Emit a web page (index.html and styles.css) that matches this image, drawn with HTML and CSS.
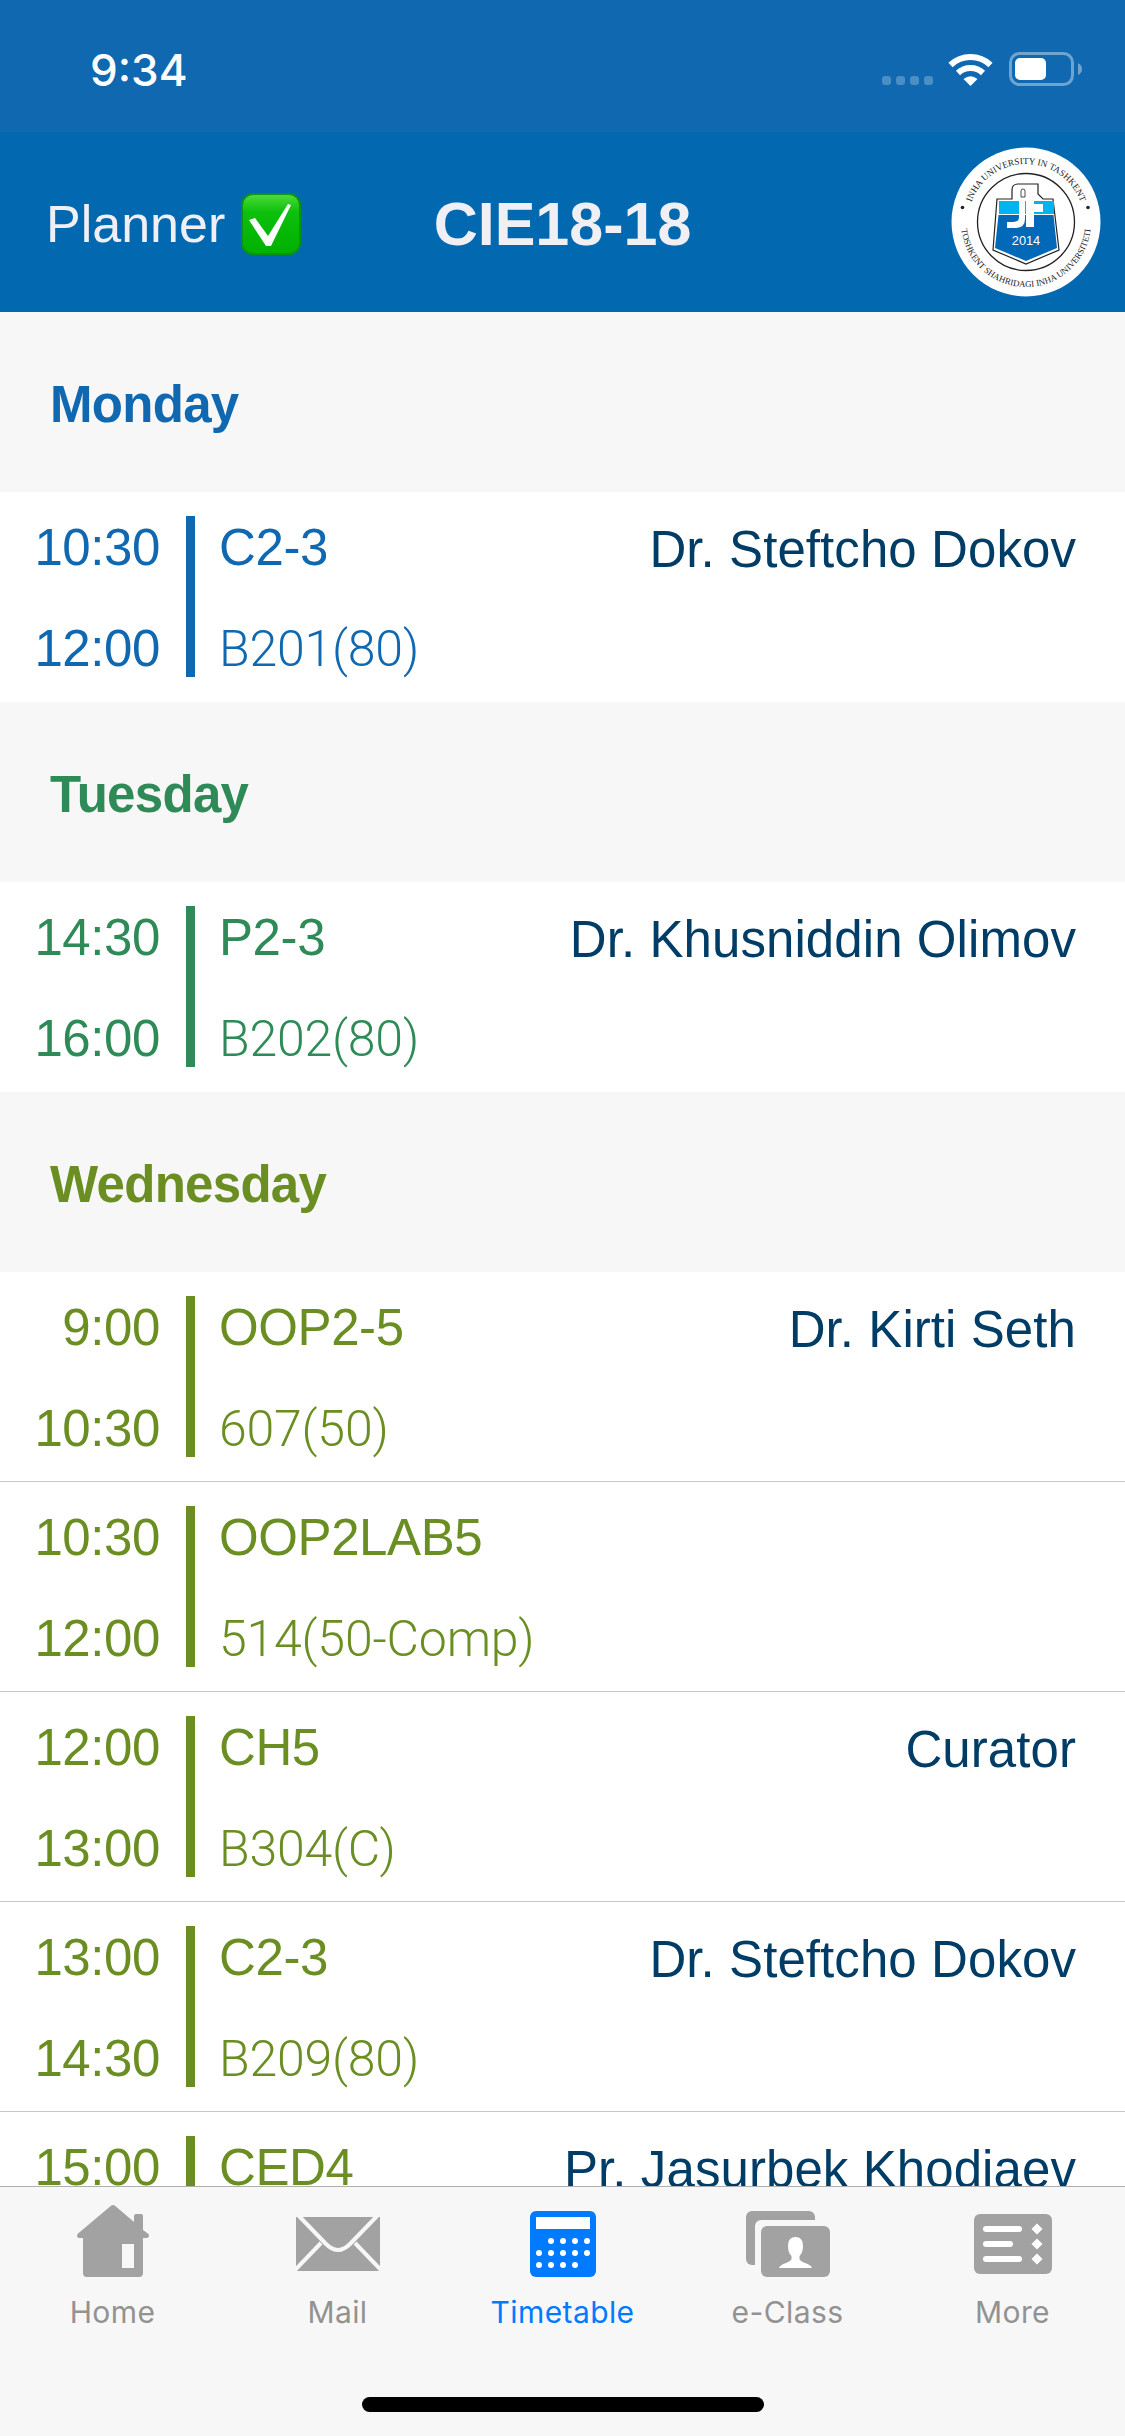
FILE: index.html
```html
<!DOCTYPE html>
<html lang="en">
<head>
    <meta charset="UTF-8">
    <meta name="viewport" content="width=device-width, initial-scale=1.0">
    <title>Planner - CIE18-18</title>
    <link rel="stylesheet" href="styles.css">
</head>
<body>
    <!-- Status Bar -->
    <div class="status-bar">
        <span class="status-time">9:34</span>
        <div class="status-icons">
            <div class="signal"><span></span><span></span><span></span><span></span></div>
            <svg class="wifi" viewBox="0 0 45 33" width="45" height="33">
                <path d="M2.5 12 A29 29 0 0 1 42.5 12" fill="none" stroke="#fff" stroke-width="6"/>
                <path d="M10 20 A18 18 0 0 1 35 20" fill="none" stroke="#fff" stroke-width="6"/>
                <path d="M15.5 26 Q22.5 20.5 29.5 26 L22.5 33 Z" fill="#fff"/>
            </svg>
            <svg class="battery" viewBox="0 0 73 34" width="73" height="34">
                <rect x="1.5" y="1.5" width="62" height="31" rx="9" fill="none" stroke="#fff" stroke-opacity="0.4" stroke-width="3"/>
                <rect x="6" y="6" width="31" height="22" rx="5" fill="#fff"/>
                <path d="M69 11 Q73 13 73 17 Q73 21 69 23 Z" fill="#fff" fill-opacity="0.4"/>
            </svg>
        </div>
    </div>

    <!-- Navigation Bar -->
    <header class="navbar">
        <div class="nav-left">
            <span class="nav-planner">Planner</span>
            <svg class="check-emoji" viewBox="0 0 60 62" width="60" height="62">
                <defs>
                    <linearGradient id="check-green" x1="0" y1="0" x2="0" y2="1">
                        <stop offset="0" stop-color="#4fdc3c"/>
                        <stop offset="0.3" stop-color="#0cc00c"/>
                        <stop offset="1" stop-color="#00b000"/>
                    </linearGradient>
                </defs>
                <rect x="1" y="1" width="58" height="60" rx="11" fill="url(#check-green)" stroke="#0a9412" stroke-width="2"/>
                <path d="M8 27 L14 25 L27 43 L47 11 L50 12 L30 53 L25 53 Z" fill="#fff"/>
            </svg>
        </div>
        <h1 class="nav-title">CIE18-18</h1>
        <svg class="logo" viewBox="0 0 150 150" width="150" height="150">
            <circle cx="75" cy="75" r="74.5" fill="#fff"/>
            <defs>
                <path id="arc-top" d="M17 75 A58 58 0 0 1 133 75"/>
                <path id="arc-bottom" d="M10 75 A65 65 0 0 0 140 75"/>
            </defs>
            <text class="logo-ring-text"><textPath href="#arc-top" startOffset="50%">INHA UNIVERSITY IN TASHKENT</textPath></text>
            <text class="logo-ring-text small"><textPath href="#arc-bottom" startOffset="50%">TOSHKENT SHAHRIDAGI INHA UNIVERSITETI</textPath></text>
            <circle cx="11.5" cy="60.5" r="1.8" fill="#222"/>
            <circle cx="137" cy="60.5" r="1.8" fill="#222"/>
            <circle cx="75" cy="75" r="48.5" fill="#fff" stroke="#222" stroke-width="1.3"/>
            <path d="M46 52 H61 V43 Q61 37 67 37 H87 V47 L92 52 H102 L108 103 L75 117 L42 103 Z" fill="#fff" stroke="#222" stroke-width="1.2"/>
            <rect x="48" y="54" width="55" height="13" fill="#00b5ef"/>
            <path d="M47.5 68 H102.5 L106 101 L75 114 L44 101 Z" fill="#0268b8"/>
            <path d="M68 44 H74 V72 Q74 81 64 81 H56 V75 H62 Q68 75 68 70 Z M75 39 H83 V57 H92 V65 H83 V80 H75 Z" fill="#fff"/>
            <path d="M70 50 V44 Q70 42 72 42 Q74 42 74 44 V50 Z" fill="none" stroke="#222" stroke-width="0.8"/>
            <text class="logo-year" x="75" y="98">2014</text>
        </svg>
    </header>

    <!-- Timetable -->
    <main class="timetable">
        <section class="day day-monday">
            <h2 class="day-name">Monday</h2>
            <div class="lesson">
                <div class="lesson-col lesson-times"><span>10:30</span><span>12:00</span></div>
                <div class="lesson-bar"></div>
                <div class="lesson-col"><span>C2-3</span><span class="room">B201(80)</span></div>
                <div class="teacher">Dr. Steftcho Dokov</div>
            </div>
        </section>

        <section class="day day-tuesday">
            <h2 class="day-name">Tuesday</h2>
            <div class="lesson">
                <div class="lesson-col lesson-times"><span>14:30</span><span>16:00</span></div>
                <div class="lesson-bar"></div>
                <div class="lesson-col"><span>P2-3</span><span class="room">B202(80)</span></div>
                <div class="teacher">Dr. Khusniddin Olimov</div>
            </div>
        </section>

        <section class="day day-wednesday">
            <h2 class="day-name">Wednesday</h2>
            <div class="lesson">
                <div class="lesson-col lesson-times"><span>9:00</span><span>10:30</span></div>
                <div class="lesson-bar"></div>
                <div class="lesson-col"><span>OOP2-5</span><span class="room">607(50)</span></div>
                <div class="teacher">Dr. Kirti Seth</div>
            </div>
            <div class="lesson">
                <div class="lesson-col lesson-times"><span>10:30</span><span>12:00</span></div>
                <div class="lesson-bar"></div>
                <div class="lesson-col"><span>OOP2LAB5</span><span class="room">514(50-Comp)</span></div>
                <div class="teacher"></div>
            </div>
            <div class="lesson">
                <div class="lesson-col lesson-times"><span>12:00</span><span>13:00</span></div>
                <div class="lesson-bar"></div>
                <div class="lesson-col"><span>CH5</span><span class="room">B304(C)</span></div>
                <div class="teacher">Curator</div>
            </div>
            <div class="lesson">
                <div class="lesson-col lesson-times"><span>13:00</span><span>14:30</span></div>
                <div class="lesson-bar"></div>
                <div class="lesson-col"><span>C2-3</span><span class="room">B209(80)</span></div>
                <div class="teacher">Dr. Steftcho Dokov</div>
            </div>
            <div class="lesson">
                <div class="lesson-col lesson-times"><span>15:00</span></div>
                <div class="lesson-bar"></div>
                <div class="lesson-col"><span>CED4</span></div>
                <div class="teacher">Pr. Jasurbek Khodiaev</div>
            </div>
        </section>
    </main>

    <!-- Tab Bar -->
    <footer class="tabbar">
        <nav class="tabs">
            <a class="tab" href="#">
                <svg viewBox="0 0 90 74" width="90" height="74">
                    <path fill-rule="evenodd" d="M43 1.8 Q45 0.4 47 1.8 L66 18 V12 Q66 10 68 10 H73 Q75 10 75 12 V26 L80.5 30 Q82 33 79 34 H75 V69 Q75 73 71 73 H19 Q15 73 15 69 V34 H11 Q8 33 9.5 30 Z M54 40 V64 H66 V40 Z"/>
                </svg>
                <span>Home</span>
            </a>
            <a class="tab" href="#">
                <svg viewBox="0 0 90 74" width="90" height="74">
                    <rect x="3" y="13" width="84" height="54"/>
                    <path class="mail-fold" d="M5 11 L33 40 Q45 52 57 40 L85 11 M1 67 L28 39 M89 67 L62 39"/>
                </svg>
                <span>Mail</span>
            </a>
            <a class="tab tab-active" href="#">
                <svg viewBox="0 0 90 74" width="90" height="74">
                    <rect x="12" y="7" width="66" height="66" rx="6"/>
                    <rect class="cut" x="18" y="13" width="54" height="12"/>
                    <g class="cut">
                        <circle cx="33" cy="37" r="3"/><circle cx="45" cy="37" r="3"/><circle cx="57" cy="37" r="3"/><circle cx="69" cy="37" r="3"/>
                        <circle cx="21" cy="49" r="3"/><circle cx="33" cy="49" r="3"/><circle cx="45" cy="49" r="3"/><circle cx="57" cy="49" r="3"/><circle cx="69" cy="49" r="3"/>
                        <circle cx="21" cy="61" r="3"/><circle cx="33" cy="61" r="3"/><circle cx="45" cy="61" r="3"/><circle cx="57" cy="61" r="3"/>
                    </g>
                </svg>
                <span>Timetable</span>
            </a>
            <a class="tab" href="#">
                <svg viewBox="0 0 90 74" width="90" height="74">
                    <rect x="3" y="7" width="69" height="54" rx="6"/>
                    <rect class="bg-cut" x="12" y="16" width="76" height="58" rx="6"/>
                    <rect x="18" y="22" width="69" height="51" rx="6"/>
                    <path class="cut" d="M52.5 33 Q60 33 60 42 Q60 49 56.5 52 V55 Q57 57 62 59 Q68 61 69 64 H36 Q37 61 43 59 Q48 57 48.5 55 V52 Q45 49 45 42 Q45 33 52.5 33 Z"/>
                </svg>
                <span>e-Class</span>
            </a>
            <a class="tab" href="#">
                <svg viewBox="0 0 90 74" width="90" height="74">
                    <rect x="6" y="10" width="78" height="60" rx="6"/>
                    <g class="cut">
                        <rect x="15" y="22" width="39" height="6" rx="3"/>
                        <rect x="15" y="37" width="30" height="6" rx="3"/>
                        <rect x="15" y="52" width="39" height="6" rx="3"/>
                        <path d="M69 19.5 L74.5 25 L69 30.5 L63.5 25 Z"/>
                        <path d="M69 34.5 L74.5 40 L69 45.5 L63.5 40 Z"/>
                        <path d="M69 49.5 L74.5 55 L69 60.5 L63.5 55 Z"/>
                    </g>
                </svg>
                <span>More</span>
            </a>
        </nav>
        <div class="home-indicator"></div>
    </footer>
</body>
</html>
```

FILE: styles.css
```css
/* Base Styles */
* {
    box-sizing: border-box;
}

body {
    font-family: 'Liberation Sans', Arial, sans-serif;
    background-color: #f7f7f7;
    margin: 0;
    padding: 0;
    width: 1125px;
    height: 2436px;
    overflow: hidden;
    display: flex;
    flex-direction: column;
}

/* Status Bar */
.status-bar {
    height: 132px;
    flex-shrink: 0;
    background-color: #0f68b0;
    color: #fff;
    display: flex;
    justify-content: space-between;
    align-items: flex-start;
    padding: 52px 43px 0 90px;
}

.status-time {
    font-family: Inter, 'Liberation Sans', sans-serif;
    font-weight: 500;
    font-size: 44px;
    line-height: 36px;
}

.status-icons {
    display: flex;
    align-items: flex-end;
}

.signal {
    display: flex;
    gap: 5px;
    margin-right: 15px;
    margin-bottom: 1px;
}

.signal span {
    width: 9px;
    height: 9px;
    border-radius: 3px;
    background-color: rgba(255, 255, 255, 0.25);
}

.wifi {
    margin-right: 16px;
}

/* Navigation Bar */
.navbar {
    height: 180px;
    flex-shrink: 0;
    background-color: #0268b0;
    display: grid;
    grid-template-columns: 1fr auto 1fr;
    align-items: center;
    padding: 0 24px;
    color: #efeff4;
}

.nav-left {
    display: flex;
    align-items: center;
    gap: 16px;
    margin-left: 22px;
    font-size: 52px;
}

.nav-planner {
    padding-top: 3px;
}

.check-emoji {
    margin-top: 3px;
}

.nav-title {
    margin: 0;
    padding-top: 3px;
    font-size: 61px;
    font-weight: bold;
}

.logo {
    justify-self: end;
}

.logo-ring-text {
    font-family: 'Liberation Serif', serif;
    font-size: 9.2px;
    text-anchor: middle;
    fill: #222;
}

.logo-ring-text.small {
    font-size: 8.8px;
}

.logo-year {
    font-size: 12.8px;
    fill: #fff;
    text-anchor: middle;
}

/* Timetable */
.timetable {
    flex: 1;
    min-height: 0;
    overflow: hidden;
}

.day-name {
    margin: 0;
    height: 180px;
    display: flex;
    align-items: center;
    padding: 4px 0 0 50px;
    font-size: 51px;
    font-weight: bold;
    letter-spacing: -0.7px;
}

.lesson {
    height: 210px;
    background-color: #fff;
    border-bottom: 1px solid #c6c6c6;
    display: flex;
    align-items: flex-start;
    padding-top: 24px;
    font-size: 51px;
    line-height: 64px;
}

.lesson:last-child {
    border-bottom: none;
}

.lesson-col {
    display: flex;
    flex-direction: column;
    gap: 37px;
    white-space: nowrap;
    letter-spacing: -0.4px;
}

.lesson-times {
    width: 160px;
    align-items: flex-end;
}

.lesson-bar {
    width: 9px;
    height: 161px;
    margin: 0 24px 0 26px;
    background-color: currentColor;
}

.room {
    font-family: Roboto, 'Liberation Sans', sans-serif;
    font-weight: 300;
    font-size: 50px;
    letter-spacing: -0.2px;
}

.teacher {
    flex: 1;
    text-align: right;
    padding: 2px 49px 0 0;
    color: #003d66;
    white-space: nowrap;
    letter-spacing: 0.08px;
}

.day-monday {
    color: #0f68b0;
}

.day-tuesday {
    color: #2e8b57;
}

.day-wednesday {
    color: #6b8e23;
}

/* Tab Bar */
.tabbar {
    height: 250px;
    flex-shrink: 0;
    background-color: #f7f7f7;
    border-top: 1px solid #b0b0b0;
    padding-top: 17px;
    display: flex;
    flex-direction: column;
}

.tabs {
    display: flex;
}

.tab {
    width: 225px;
    display: flex;
    flex-direction: column;
    align-items: center;
    text-decoration: none;
    font-family: Inter, 'Liberation Sans', sans-serif;
    font-size: 30px;
    line-height: 36px;
    letter-spacing: 0.4px;
    color: #929292;
}

.tab svg {
    fill: #a2a2a2;
    margin-bottom: 16px;
}

.tab-active {
    color: #007aff;
}

.tab-active svg {
    fill: #007aff;
}

.tab svg .cut {
    fill: #fff;
}

.tab svg .bg-cut {
    fill: #f7f7f7;
}

.tab svg .mail-fold {
    fill: none;
    stroke: #f7f7f7;
    stroke-width: 4;
}

.home-indicator {
    width: 402px;
    height: 15px;
    border-radius: 8px;
    background-color: #000;
    margin: 67px auto 0;
}
```
